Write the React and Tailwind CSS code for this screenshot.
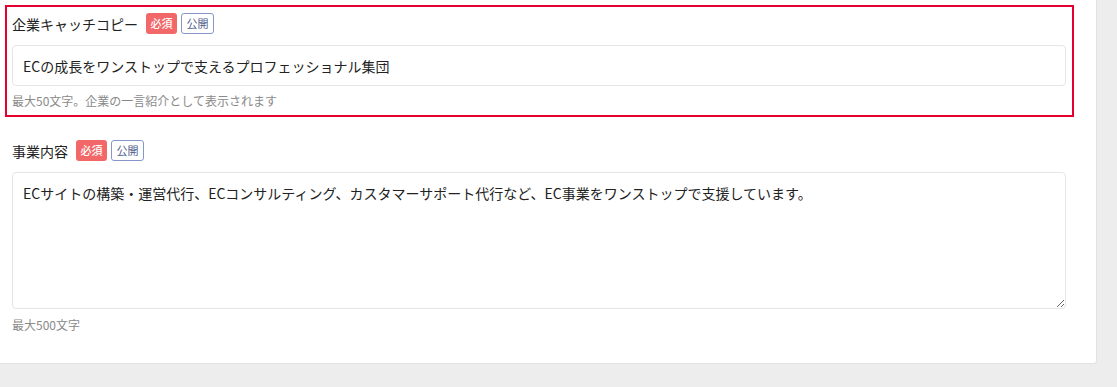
import { useState } from 'react';

const font = { fontFamily: '"Noto Sans CJK JP", "Noto Sans", sans-serif' };

function Badges() {
  return (
    <div className="flex items-center gap-[4px]">
      <span className="inline-flex h-[21px] w-[31px] items-center justify-center rounded-[3px] bg-[#f26868] text-[11px] font-medium text-white">
        必須
      </span>
      <span className="inline-flex h-[21px] w-[33px] items-center justify-center rounded-[3px] border border-[#8597c8] bg-white text-[11px] text-[#4d5d8c]">
        公開
      </span>
    </div>
  );
}

function FieldLabel({ children }) {
  return (
    <div className="flex h-[21px] items-center gap-[8px]">
      <span className="text-[14px] leading-none text-[#222]">{children}</span>
      <Badges />
    </div>
  );
}

export default function App() {
  const [catchCopy, setCatchCopy] = useState('ECの成長をワンストップで支えるプロフェッショナル集団');
  const [business, setBusiness] = useState(
    'ECサイトの構築・運営代行、ECコンサルティング、カスタマーサポート代行など、EC事業をワンストップで支援しています。'
  );

  return (
    <div className="min-h-[387px] w-full bg-[#ededed]" style={font}>
      <div className="w-[1097px] rounded-br-[3px] border-r border-b border-[#e2e2e2] bg-white px-[5px] pt-[5px] pb-[27px]">
        {/* Catch copy (highlighted) */}
        <div className="w-[1069px] border-2 border-[#e6002e] px-[5px] pt-[6px] pb-[5px]">
          <FieldLabel>企業キャッチコピー</FieldLabel>
          <input
            className="mt-[11px] block h-[41px] w-[1054px] rounded-[4px] border border-[#e6e6e6] px-[10px] text-[14px] text-[#222] outline-none"
            value={catchCopy}
            onChange={(e) => setCatchCopy(e.target.value)}
          />
          <p className="mt-[6px] text-[12px] leading-[18px] text-[#8a8a8a]">
            最大50文字。企業の一言紹介として表示されます
          </p>
        </div>

        {/* Business description */}
        <div className="mt-[15px] w-[1069px] border-2 border-transparent px-[5px] pt-[6px]">
          <FieldLabel>事業内容</FieldLabel>
          <textarea
            className="mt-[11px] block h-[137px] w-[1054px] rounded-[4px] border border-[#e6e6e6] px-[10px] py-[10px] text-[14px] leading-[20px] text-[#222] outline-none"
            value={business}
            onChange={(e) => setBusiness(e.target.value)}
          />
          <p className="mt-[7px] text-[12px] leading-[18px] text-[#8a8a8a]">最大500文字</p>
        </div>
      </div>
    </div>
  );
}
